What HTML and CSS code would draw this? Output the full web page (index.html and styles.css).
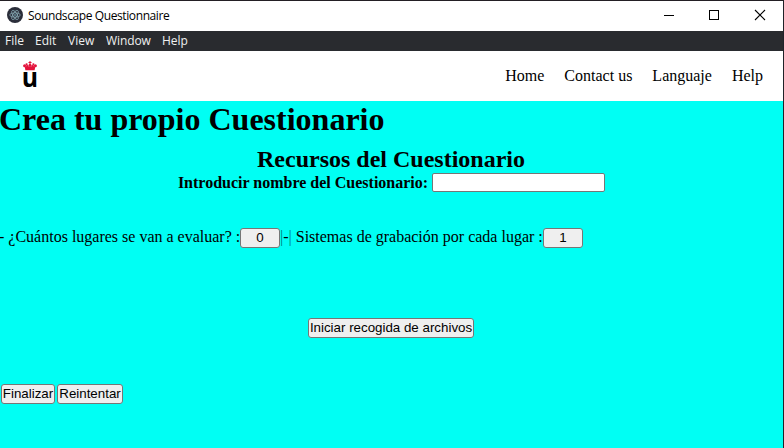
FILE: index.html
```
<!DOCTYPE html>
<html lang="es">
<head>
<meta charset="utf-8">
<title>Soundscape Questionnaire</title>
<link rel="stylesheet" href="styles.css">
</head>
<body>
<div class="window">
  <header class="titlebar">
    <svg class="app-icon" viewBox="0 0 16 16">
      <circle cx="8" cy="8" r="8" fill="#2b2e3a"/>
      <g fill="none" stroke="#8fb3bd" stroke-width=".7">
        <ellipse cx="8" cy="8" rx="5.2" ry="2.1"/>
        <ellipse cx="8" cy="8" rx="5.2" ry="2.1" transform="rotate(60 8 8)"/>
        <ellipse cx="8" cy="8" rx="5.2" ry="2.1" transform="rotate(120 8 8)"/>
      </g>
      <circle cx="8" cy="8" r=".7" fill="#9feaf9"/>
    </svg>
    <span class="app-title">Soundscape Questionnaire</span>
    <svg class="controls" viewBox="0 0 98 12" fill="none" stroke="#000" shape-rendering="crispEdges">
      <path d="M0 5.5h10M45.500 .5h9v9h-9z"/>
      <path d="M91 0l10 10M101 0l-10 10" stroke-width="1.1" shape-rendering="auto"/>
    </svg>
  </header>
  <div class="menubar">
    <span class="m-file">File</span><span class="m-edit">Edit</span><span class="m-view">View</span><span class="m-window">Window</span><span>Help</span>
  </div>
  <nav class="nav">
    <div class="logo">
      <svg class="crown" viewBox="0 0 14 10" fill="#e4123b">
        <path d="M6.500 0h1v1h1v1h-1v1.500h-1V2h-1V1h1z"/>
        <circle cx="3.600" cy="3.300" r="1.100"/><circle cx="10.400" cy="3.300" r="1.100"/>
        <circle cx="1.600" cy="4.700" r="1.500"/><circle cx="12.400" cy="4.700" r="1.500"/>
        <circle cx="7" cy="4.300" r="1.500"/><circle cx="4.300" cy="5.200" r="1.200"/><circle cx="9.700" cy="5.200" r="1.200"/>
        <path d="M1.800 6l2.500-.2L7 5.300l2.700 .5 2.500 .2-.6 3.200H2.400z"/>
      </svg>
      <span class="logo-u">u</span>
    </div>
    <div class="links">
      <a>Home</a><a>Contact us</a><a>Languaje</a><a>Help</a>
    </div>
  </nav>
  <main class="content">
    <h1>Crea tu propio Cuestionario</h1>
    <h2>Recursos del Cuestionario</h2>
    <div class="name-row"><label for="name">Introducir nombre del Cuestionario:</label><input id="name" type="text"></div>
    <div class="counts">
      <span class="q1">- ¿Cuántos lugares se van a evaluar? :</span><button class="num">0</button><span class="q2"><i class="bar">|</i>-<i class="bar">|</i> Sistemas de grabación por cada lugar :</span><button class="num">1</button>
    </div>
    <div class="start"><button class="b-start">Iniciar recogida de archivos</button></div>
    <div class="actions"><button class="b-end">Finalizar</button><button class="b-retry">Reintentar</button></div>
  </main>
</div>
</body>
</html>
```
FILE: styles.css
```
* { box-sizing: border-box; }
body {
  margin: 0;
  background: #292b2f;
  font: 16px "Liberation Serif", serif;
  color: #000;
}
.window {
  width: 784px;
  height: 448px;
  display: flex;
  flex-direction: column;
  overflow: hidden;
  border-top: 1px solid #231f24;
  border-right: 1px solid #202329;
}
.titlebar {
  height: 30px;
  background: #fff;
  display: flex;
  align-items: center;
  padding-left: 7px;
  flex: none;
}
.app-icon { width: 16px; height: 16px; margin-top: -2px; }
.app-title {
  font: 12px/16px "Open Sans", sans-serif;
  margin-left: 5px;
  letter-spacing: -0.4px;
}
.controls {
  width: 98px;
  height: 12px;
  margin-left: auto;
  margin-right: 21px;
  overflow: visible;
}
.menubar {
  height: 20px;
  background: #292b2f;
  color: #f0f0f0;
  display: flex;
  align-items: center;
  padding-left: 5px;
  font: 12px/18px "Open Sans", sans-serif;
  flex: none;
}
.m-file { width: 30px; }
.m-edit { width: 33px; }
.m-view { width: 38px; }
.m-window { width: 56px; letter-spacing: -0.1px; }
.nav {
  height: 50px;
  background: #fff;
  display: flex;
  justify-content: space-between;
  padding: 0 20px 0 22px;
  flex: none;
}
.logo {
  width: 15px;
  display: flex;
  flex-direction: column;
  align-items: center;
  padding-top: 10px;
}
.crown { width: 14px; height: 10px; flex: none; }
.logo-u {
  font: bold 27px/11px "Open Sans", sans-serif;
  transform: scaleX(.92);
}
.links { display: flex; gap: 20px; line-height: 50px; }
.content { flex: 1; background: #00fff4; }
h1 { margin: 0 0 0 -1px; font-size: 32px; line-height: 37px; white-space: nowrap; }
h2 { margin: 8px 1px 0 0; font-size: 24px; line-height: 27px; text-align: center; }
.name-row {
  display: flex;
  justify-content: center;
  align-items: center;
  height: 19px;
  line-height: 19px;
  font-weight: bold;
}
.name-row label { padding-bottom: 1px; }
.name-row input {
  width: 173px;
  height: 19px;
  margin-left: 4px;
  border: 1px solid #767676;
  border-radius: 2px;
  background: #fff;
}
button {
  height: 20px;
  padding: 0;
  font: 13.333px/16px "Liberation Sans", sans-serif;
  color: #000;
  background: #efefef;
  border: 1px solid #767676;
  border-radius: 3px;
  white-space: nowrap;
}
.counts {
  display: flex;
  align-items: center;
  height: 20px;
  margin-top: 36px;
  line-height: 18px;
  white-space: nowrap;
}
.q1, .q2 { padding-bottom: 2px; }
.q1 { width: 241px; margin-left: -1px; }
.q2 { width: 263px; }
.num { width: 40px; }
.bar { font-style: normal; color: #007f7a; }
.start { margin-top: 70px; padding-left: 308px; display: flex; }
.b-start { width: 166px; }
.actions { margin-top: 46px; padding-left: 1px; display: flex; gap: 2px; }
.b-end { width: 54px; }
.b-retry { width: 66px; }
```
